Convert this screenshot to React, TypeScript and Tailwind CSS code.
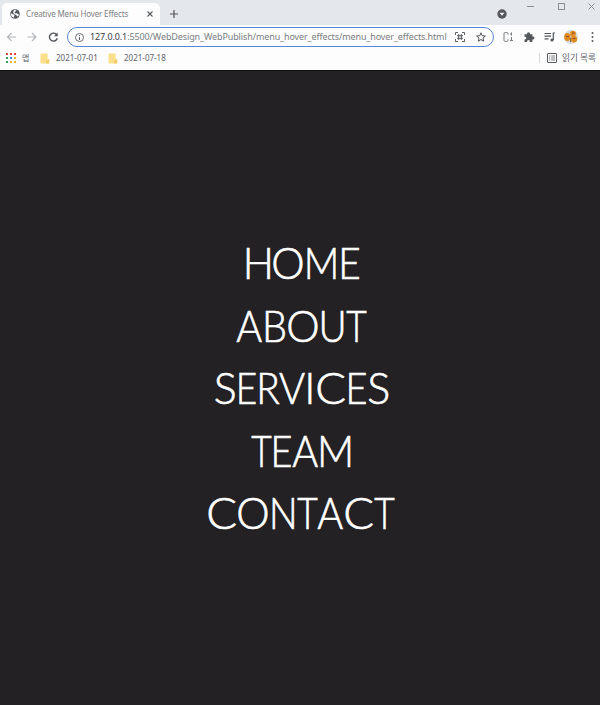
import React from 'react';

type Glyph = [letter: string, shape: string];

// Each letter carries its own optical width and spacing.
const menu: Glyph[][] = [
  [['H', 'scale-x-[0.96] mr-[-3px]'], ['O', 'scale-x-[0.98] mr-[-2.8px]'], ['M', 'scale-x-[0.91] mr-[-4.2px]'], ['E', 'scale-x-[0.9]']],
  [['A', 'scale-x-[0.92] mr-[-3.1px]'], ['B', 'scale-x-[0.92] mr-[-2.1px]'], ['O', 'scale-x-[0.98] mr-[-2.4px]'], ['U', 'scale-x-[0.9] mr-[-5px]'], ['T', 'scale-x-[0.82]']],
  [['S', 'mr-[-2.8px]'], ['E', 'scale-x-[0.86] mr-[-4px]'], ['R', 'scale-x-[0.9] mr-[-2.7px]'], ['V', 'scale-x-[0.93] mr-[-2.1px]'], ['I', 'mr-[0.3px]'], ['C', 'scale-x-[1.06] mr-[-0.6px]'], ['E', 'scale-x-[0.88] mr-[-1.9px]'], ['S', '']],
  [['T', 'scale-x-[0.82] mr-[-5.1px]'], ['E', 'scale-x-[0.88] mr-[-3px]'], ['A', 'scale-x-[0.92] mr-[-3.6px]'], ['M', 'scale-x-[0.95]']],
  [['C', 'scale-x-[1.06] mr-[0.6px]'], ['O', 'scale-x-[0.98] mr-[-3px]'], ['N', 'scale-x-[0.88] mr-[-4.9px]'], ['T', 'scale-x-[0.82] mr-[-3.8px]'], ['A', 'scale-x-[0.92] mr-[0.1px]'], ['C', 'scale-x-[1.06] mr-[-0.9px]'], ['T', 'scale-x-[0.82]']],
];

const appColors = ['#e0443a', '#e0443a', '#e0443a', '#34a05a', '#4a86e8', '#eeb52c', '#34a05a', '#eeb52c', '#eeb52c'];

function Folder() {
  return (
    <svg className="h-[11px] w-[10px] shrink-0" viewBox="0 0 10 11">
      <path d="M.5 1.5Q.5.6 1.4.6H7.6V6.2H9.2V10.4H1.4Q.5 10.4.5 9.5Z" fill="#fbdf8a" />
      <path d="M7.6 6.2H9.2V10.4H6V8Q7.6 8 7.6 6.2Z" fill="#f3cf6b" />
    </svg>
  );
}

function TabStrip() {
  return (
    <div className="flex h-[25px] bg-[#e4e7eb]">
      <div className="mt-[3px] ml-[2px] flex h-[22px] w-[158px] items-center rounded-t-[5px] bg-[#fdfdfe] pl-[8px]">
        <svg className="h-[10px] w-[10px] shrink-0" viewBox="0 0 10 10">
          <circle cx="5" cy="5" r="4.8" fill="#55595d" />
          <path d="M1 4.3 3 5.2 4.6 5.5 4.2 7 3.7 8.8 2 7.8.9 6ZM4 1 6.3 1.3 5.6 2.6 4.4 3.2 5 4.3 7 4.2 8.2 5.6 9 5 8.6 6.8 7 7.5 6.4 6 4.2 4.9 3 3.6Z" fill="#fdfdfe" />
        </svg>
        <span className="ml-[6px] w-[121px] text-[8px] whitespace-nowrap text-[#7d8084] tracking-[-0.15px]">Creative Menu Hover Effects</span>
        <svg className="h-[6px] w-[6px] shrink-0" viewBox="0 0 6 6" stroke="#55585c" strokeWidth="1.1">
          <path d="M.5.5 5.5 5.5M5.5.5.5 5.5" />
        </svg>
      </div>
      <svg className="mt-[10px] ml-[10px] h-[8px] w-[8px]" viewBox="0 0 8 8" stroke="#505357" strokeWidth="1.2">
        <path d="M4 0V8M0 4H8" />
      </svg>
      <svg className="mt-[9px] ml-[319px] h-[10px] w-[10px]" viewBox="0 0 10 10">
        <circle cx="5" cy="5" r="4.7" fill="#55585c" />
        <path d="M2.6 3.8H7.4L5 6.8Z" fill="#f2f4f6" />
      </svg>
      <svg className="mt-[2px] ml-[20px] h-[9px] w-[70px]" viewBox="0 0 70 9" fill="none" stroke="#8b8e92" strokeWidth="1">
        <path d="M0 4.5H7M61.5 1.5 67.5 7.5M67.5 1.5 61.5 7.5" />
        <rect x="31.5" y="1.5" width="6" height="6" />
      </svg>
    </div>
  );
}

function AddressBar() {
  return (
    <div className="flex h-[24px] items-center">
      <svg className="h-[12px] w-[67px] shrink-0" viewBox="0 0 67 12" fill="none" strokeWidth="1.2">
        <path d="M16 6H7.5M11.5 2 7.5 6 11.5 10M27.5 6H36M32 2 36 6 32 10" stroke="#b4b6b9" />
        <path d="M56.3 3.3A4 4 0 1 0 57.3 7.2" stroke="#505357" strokeWidth="1.4" />
        <path d="M57.7 1.6V5.3H54Z" fill="#505357" />
      </svg>
      <div className="flex h-[20px] w-[427px] shrink-0 items-center rounded-full border-[1.5px] border-[#5686d8] bg-[#fdfdfe] pl-[7px]">
        <svg className="h-[9px] w-[9px] shrink-0" viewBox="0 0 9 9" fill="none" stroke="#5b5e62">
          <circle cx="4.5" cy="4.5" r="4" strokeWidth=".9" />
          <path d="M4.5 4V7M4.5 2V3" strokeWidth="1.1" />
        </svg>
        <span className="ml-[6px] w-[365px] text-[9px] whitespace-nowrap text-[#7b7e82] tracking-[-0.11px]">
          <span className="text-[#3d4044]">127.0.0.1</span>:5500/WebDesign_WebPublish/menu_hover_effects/menu_hover_effects.html
        </span>
        <svg className="h-[10px] w-[10px] shrink-0" viewBox="0 0 10 10" fill="none" stroke="#5b5e62">
          <path d="M.5 3V.5H3M7 .5H9.5V3M9.5 7V9.5H7M3 9.5H.5V7" />
          <path d="M3.7 2V8M6.3 2V8M2 3.7H8M2 6.3H8" />
        </svg>
        <svg className="ml-[11px] h-[10px] w-[10px] shrink-0" viewBox="0 0 10 10" fill="none" stroke="#505357" strokeLinejoin="round">
          <path d="M5 .8 6.2 3.7 9.4 4 7 6.1 7.7 9.2 5 7.5 2.3 9.2 3 6.1.6 4 3.8 3.7Z" />
        </svg>
      </div>
      <svg className="h-[16px] w-[106px] shrink-0" viewBox="0 0 106 16" fill="none">
        <path d="M14 5.6V4.8Q14 3.5 12.7 3.5H11.3Q10 3.5 10 4.8V11.2Q10 12.5 11.3 12.5H12.7Q14 12.5 14 11.2V10.4" stroke="#777a7e" />
        <path d="M17.5 3.5V6.5M17.5 8V12M16 5H18M16 11.5H19" stroke="#777a7e" />
        <path transform="translate(-4 0)" d="M34.5 5.2H37V4.7A1.5 1.5 0 0 1 40 4.7V5.2H42.4V7.6H43A1.4 1.4 0 0 1 43 10.4H42.4V13H39.8V12.4A1.3 1.3 0 0 0 37.2 12.4V13H34.5V10.4H35A1.3 1.3 0 0 0 35 7.8H34.5Z" fill="#55585c" />
        <path d="M50.5 4.5H57M50.5 7.2H57M50.5 9.9H54.5M59.3 11V4H61" stroke="#55585c" strokeWidth="1.2" />
        <circle cx="58" cy="11" r="1.6" fill="#55585c" />
        <circle cx="77" cy="8" r="7" fill="#d3d8d9" />
        <ellipse cx="73.3" cy="8" rx="3.1" ry="4" fill="#df8b22" />
        <ellipse cx="79" cy="4.8" rx="2.9" ry="3.1" fill="#df8b22" />
        <ellipse cx="80" cy="10.3" rx="3.1" ry="3.2" fill="#df8b22" />
        <path d="M72 7.5H75M78 4H80.5M78.5 9.5H81.5M76.5 9V13" stroke="#704823" strokeWidth=".8" />
        <g fill="#55585c"><circle cx="98.5" cy="4" r="1" /><circle cx="98.5" cy="8" r="1" /><circle cx="98.5" cy="12" r="1" /></g>
      </svg>
    </div>
  );
}

function Bookmarks() {
  return (
    <div className="flex h-[18px] items-center text-[8px] whitespace-nowrap text-[#606367]">
      <div className="ml-[6px] grid w-[10px] shrink-0 grid-cols-3 gap-[1.5px]">
        {appColors.map((color, i) => <i key={i} className="size-[2.3px]" style={{ backgroundColor: color }} />)}
      </div>
      <span className="ml-[6px] w-[18px]">앱</span>
      <Folder />
      <span className="ml-[6px] w-[52px]">2021-07-01</span>
      <Folder />
      <span className="ml-[6px]">2021-07-18</span>
      <span className="ml-auto h-[10px] w-px bg-[#d6d8dc]" />
      <svg className="ml-[7px] h-[10px] w-[10px] shrink-0" viewBox="0 0 10 10" fill="none" stroke="#5b5e62">
        <rect x=".5" y=".5" width="9" height="9" rx=".5" />
        <path d="M2 3H3.2M4.2 3H8M2 5H3.2M4.2 5H8M2 7H3.2M4.2 7H8" strokeWidth=".8" />
      </svg>
      <span className="ml-[5px] w-[38px] text-[8.6px]">읽기 목록</span>
    </div>
  );
}

export default function App() {
  return (
    <div className="flex h-[705px] w-[600px] flex-col overflow-hidden bg-[#232123] font-['Noto_Sans','Noto_Sans_CJK_KR',sans-serif]">
      <header className="h-[70px] shrink-0 bg-[#fdfdfe]">
        <TabStrip />
        <AddressBar />
        <Bookmarks />
      </header>
      <nav className="flex flex-1 flex-col items-center border-t border-[#111012] pt-[161px] pl-[4px] font-['Lato',sans-serif] text-[43px] font-light text-white [-webkit-text-stroke:0.65px_white]">
        {menu.map((word, i) => (
          <a key={i} className="block h-[62.5px] leading-[62.5px] whitespace-nowrap">
            {word.map(([letter, shape], j) => <span key={j} className={`inline-block ${shape}`}>{letter}</span>)}
          </a>
        ))}
      </nav>
    </div>
  );
}
